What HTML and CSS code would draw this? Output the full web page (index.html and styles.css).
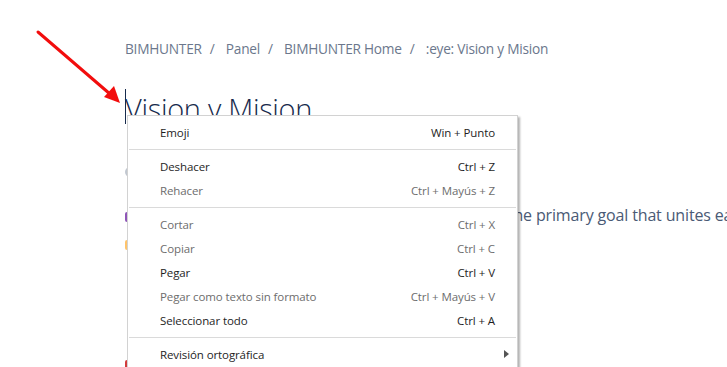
FILE: index.html
```html
<!DOCTYPE html>
<html lang="es">
<head>
  <meta charset="UTF-8" />
  <meta name="viewport" content="width=device-width, initial-scale=1.0"/>
  <title>Vision y Mision</title>
  <link rel="stylesheet" href="styles.css">
</head>
<body>
  <div class="page">
    <nav class="crumbs">
      <span>BIMHUNTER</span><span class="sep">/</span>
      <span>Panel</span><span class="sep">/</span>
      <span>BIMHUNTER Home</span><span class="sep">/</span>
      <span>:eye: Vision y Mision</span>
    </nav>

    <h1 class="title"><span class="caret"></span>Vision y Mision</h1>

    <div class="meta"><span class="dot grey"></span> Owned by BIMHUNTER</div>

    <p class="lead"><span class="dot purple"></span> Our vision at BIMHUNTER, to grow as one team, is the primary goal that unites each member of our team</p>
    <p class="line"><span class="dot orange"></span> for the next years</p>
    <p class="line low"><span class="dot red"></span> Mision</p>
  </div>

  <ul class="menu">
    <li class="item"><span>Emoji</span><span>Win + Punto</span></li>
    <li class="rule"></li>
    <li class="item"><span>Deshacer</span><span>Ctrl + Z</span></li>
    <li class="item off"><span>Rehacer</span><span>Ctrl + Mayús + Z</span></li>
    <li class="rule"></li>
    <li class="item off"><span>Cortar</span><span>Ctrl + X</span></li>
    <li class="item off"><span>Copiar</span><span>Ctrl + C</span></li>
    <li class="item"><span>Pegar</span><span>Ctrl + V</span></li>
    <li class="item off"><span>Pegar como texto sin formato</span><span>Ctrl + Mayús + V</span></li>
    <li class="item"><span>Seleccionar todo</span><span>Ctrl + A</span></li>
    <li class="rule"></li>
    <li class="item sub"><span>Revisión ortográfica</span><span class="more"></span></li>
  </ul>

  <svg class="arrow" width="130" height="110" viewBox="0 0 130 110">
    <line x1="38" y1="32" x2="110" y2="94" stroke="#f20d0d" stroke-width="3" stroke-linecap="round"/>
    <polygon points="120,103 104,97 114,86" fill="#f20d0d"/>
  </svg>
</body>
</html>
```

FILE: styles.css
```css
body {
  margin: 0;
  background: #fff;
  font-family: "Open Sans", "Noto Sans", sans-serif;
  overflow: hidden;
}

.page {
  padding: 38px 0 0 125px;
  white-space: nowrap;
}

.crumbs {
  font-size: 13.7px;
  color: #6b778c;
  line-height: 22px;
  letter-spacing: -0.25px;
}
.crumbs .sep {
  margin: 0 8px;
}

.title {
  position: relative;
  margin: 29px 0 0;
  font-size: 29px;
  font-weight: 300;
  color: #172b4d;
  line-height: 40px;
  letter-spacing: -0.3px;
}
.caret {
  position: absolute;
  left: 0;
  top: 0;
  width: 1px;
  height: 35px;
  background: #172b4d;
}

.meta {
  margin-top: 33px;
  font-size: 12px;
  color: #6b778c;
}

.lead {
  margin: 24px 0 0;
  font-size: 16px;
  color: #4a5a75;
  line-height: 24px;
  letter-spacing: -0.15px;
}
.line {
  margin: 4px 0 0;
  font-size: 16px;
  color: #4a5a75;
  line-height: 24px;
}
.line.low {
  margin-top: 96px;
}

.dot {
  display: inline-block;
  width: 10px;
  height: 10px;
  border-radius: 2px;
  vertical-align: middle;
}
.grey { background: #c1c7d0; border-radius: 50%; }
.purple { background: #8f56b8; }
.orange { background: #ffc46b; }
.red { background: #d23b3b; }

.menu {
  position: absolute;
  left: 127px;
  top: 115px;
  width: 389px;
  height: 300px;
  margin: 0;
  padding: 4px 0 0;
  list-style: none;
  background: #fff;
  border: 1px solid #d2d2d2;
  box-shadow: 2px 2px 2px rgba(0, 0, 0, 0.3);
  font-family: "Open Sans", "Noto Sans", sans-serif;
  font-size: 11.5px;
  color: #1e1e1e;
}

.item {
  display: flex;
  justify-content: space-between;
  align-items: center;
  height: 24px;
  padding: 0 22px 0 32px;
  letter-spacing: -0.1px;
}
.item.off {
  color: #6d6d6d;
}
.item.sub {
  padding-right: 8px;
}
.more {
  width: 0;
  height: 0;
  border-top: 4px solid transparent;
  border-bottom: 4px solid transparent;
  border-left: 5px solid #555;
}

.rule {
  height: 1px;
  margin: 5px 1px 4px;
  background: #dadada;
}

.arrow {
  position: absolute;
  left: 0;
  top: 0;
}
```
